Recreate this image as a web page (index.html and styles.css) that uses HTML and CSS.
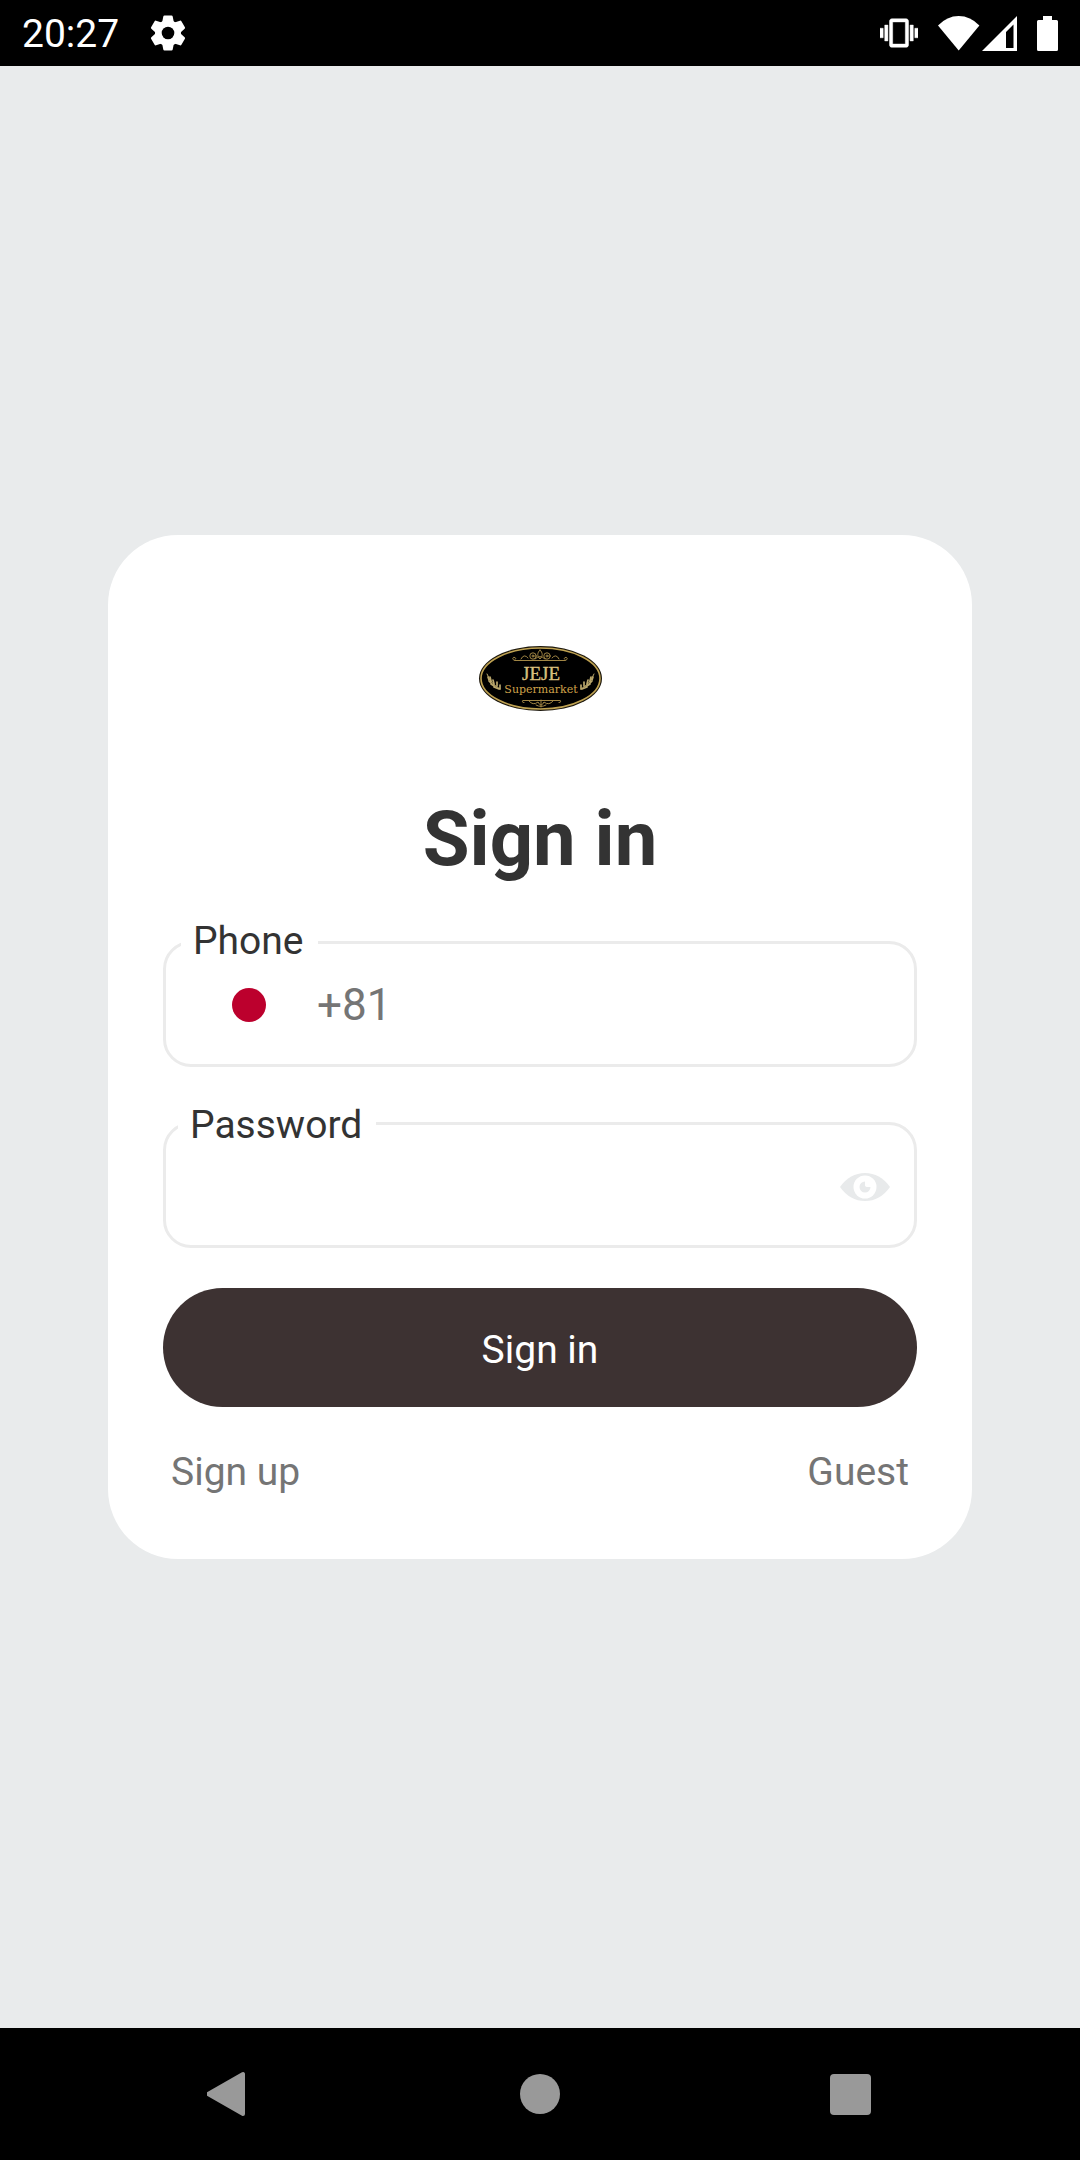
FILE: index.html
```html
<!DOCTYPE html>
<html lang="en">
<head>
<meta charset="utf-8">
<meta name="viewport" content="width=device-width, initial-scale=1">
<title>JEJE Supermarket – Sign in</title>
<link rel="stylesheet" href="styles.css">
</head>
<body>
<header class="status-bar">
  <div class="status-left">
    <span class="clock">20:27</span>
    <svg class="icon-gear" viewBox="-21 -21 42 42" aria-hidden="true">
      <g fill="#fff">
        <circle r="13"/>
        <path id="tooth" d="M-6-10L-4.700-16.500Q-4.500-17.500-3.500-17.500H3.500Q4.500-17.500 4.700-16.500L6-10Z"/>
        <use href="#tooth" transform="rotate(60)"/>
        <use href="#tooth" transform="rotate(120)"/>
        <use href="#tooth" transform="rotate(180)"/>
        <use href="#tooth" transform="rotate(240)"/>
        <use href="#tooth" transform="rotate(300)"/>
      </g>
      <circle r="6.300" fill="#000"/>
    </svg>
  </div>
  <div class="status-right">
    <svg class="icon-vibrate" viewBox="0 0 24 24" aria-hidden="true"><path fill="#fff" stroke="#fff" stroke-width=".3" d="M0 15h2V9H0v6zm3 2h2V7H3v10zm19-8v6h2V9h-2zm-3 8h2V7h-2v10zM16.500 3h-9C6.670 3 6 3.670 6 4.500v15c0 .83.67 1.500 1.500 1.500h9c.83 0 1.500-.67 1.500-1.500v-15c0-.83-.67-1.500-1.500-1.500zM16 19H8V5h8v14z"/></svg>
    <svg class="icon-wifi" viewBox="0 0 42 35" aria-hidden="true"><path fill="#fff" d="M0 9.500Q9 0 20.700 0T41.400 9.500L20.700 34.500Z"/></svg>
    <svg class="icon-signal" viewBox="0 0 35 35" aria-hidden="true"><path fill="#fff" fill-rule="evenodd" d="M0 35L35 0V35ZM24 16V32H31.500V8.500Z"/></svg>
    <svg class="icon-battery" viewBox="0 0 21 35" aria-hidden="true"><path fill="#fff" d="M6 0H15V4H19.500Q21 4 21 5.500V33.500Q21 35 19.500 35H1.500Q0 35 0 33.500V5.500Q0 4 1.500 4H6Z"/></svg>
  </div>
</header>

<main class="screen">
  <form class="card">
    <svg class="logo" viewBox="0 0 124 66" role="img" aria-label="JEJE Supermarket">
      <ellipse cx="62.500" cy="32.500" rx="61.500" ry="32.500" fill="#1c170c"/>
      <ellipse cx="62.500" cy="32.500" rx="59.500" ry="30.500" fill="#000" stroke="#bfa252" stroke-width="1.600"/>
      <g fill="none" stroke="#a18645" stroke-width="1" stroke-linecap="round">
        <path d="M37 14.500H87M37 14.500c-3 0-3-4 0-3q2 1 0 2M87 14.500c3 0 3-4 0-3q-2 1 0 2"/>
        <circle cx="55" cy="10" r="3.200"/><circle cx="69" cy="10" r="3.200"/>
        <circle cx="55" cy="10" r="1"/><circle cx="69" cy="10" r="1"/>
        <path d="M62 4c-3 3-3 6 0 9c3-3 3-6 0-9M50 12q-4-5-7 1M74 12q4-5 7 1M57 13q5-5 10 0"/>
        <path d="M45 54.500H82M45 54.500q-2 2 1 2M82 54.500q2 2-1 2M51 55q4 5 9 1q3 6 6 0q5 4 9-1M63 54v7M58 59q5 3 10 0"/>
      </g>
      <g id="leaf" stroke="#b9a66b" stroke-width="1.700" stroke-linecap="round" fill="none">
        <path stroke-width="1" d="M9 28Q13 38 22 43"/>
        <path d="M10 31L11 34M11 35L14 38M13 38L17 40.500M16 41L21 43M12 31L13 35M15 34L16 38M19 36L19 40M22 39L22 43"/>
      </g>
      <use href="#leaf" transform="matrix(-1 0 0 1 125 0)"/>
      <text class="logo-name" x="63" y="34" text-anchor="middle">JEJE</text>
      <text class="logo-sub" x="63" y="47" text-anchor="middle">Supermarket</text>
    </svg>
    <h1 class="title">Sign in</h1>

    <div class="field field-phone">
      <label class="field-label label-phone" for="phone">Phone</label>
      <button class="flag" type="button" aria-label="Country: Japan"><span class="flag-sun"></span></button>
      <input class="field-input" id="phone" type="tel" placeholder="+81">
    </div>

    <div class="field field-password">
      <label class="field-label label-password" for="password">Password</label>
      <input class="field-input" id="password" type="password">
      <button class="reveal" type="button" aria-label="Show password">
        <svg class="icon-eye" viewBox="0 0 50 28" aria-hidden="true">
          <path fill="#e8eaeb" d="M0 14Q10 0 25 0T50 14Q40 28 25 28T0 14Z"/>
          <circle cx="25" cy="14" r="11.500" fill="#fff"/>
          <path fill="#e8eaeb" d="M25 8.500A5.500 5.500 0 1 0 30.500 14H27A2.500 2.500 0 0 1 25 11Z"/>
        </svg>
      </button>
    </div>

    <button class="submit" type="submit">Sign in</button>
    <nav class="links">
      <a href="#signup">Sign up</a>
      <a href="#guest">Guest</a>
    </nav>
  </form>
</main>

<footer class="nav-bar">
  <button class="nav-button" type="button" aria-label="Back">
    <svg class="icon-nav" viewBox="0 0 46 46" aria-hidden="true"><path fill="#999" stroke="#999" stroke-width="4" stroke-linejoin="round" d="M36 3V43L1 23Z"/></svg>
  </button>
  <button class="nav-button" type="button" aria-label="Home">
    <svg class="icon-nav" viewBox="0 0 46 46" aria-hidden="true"><circle cx="23" cy="23" r="20" fill="#999"/></svg>
  </button>
  <button class="nav-button" type="button" aria-label="Recent apps">
    <svg class="icon-nav" viewBox="0 0 46 46" aria-hidden="true"><rect x="3" y="3" width="41" height="41" rx="4" fill="#999"/></svg>
  </button>
</footer>
</body>
</html>
```
FILE: styles.css
```css
* { box-sizing: border-box; }

body {
  margin: 0;
  min-height: 100vh;
  display: flex;
  flex-direction: column;
  background: #e9ebec;
  color: #333;
  font-family: Roboto, "Liberation Sans", sans-serif;
  font-size: 39px;
  line-height: 46px;
}

button, input {
  margin: 0;
  padding: 0;
  border: 0;
  background: none;
  color: inherit;
  font: inherit;
}

svg { display: block; flex: none; }

/* Status bar */
.status-bar {
  display: flex;
  justify-content: space-between;
  align-items: center;
  height: 66px;
  padding: 0 22px;
  background: #000;
  color: #fff;
}
.status-left, .status-right { display: flex; align-items: center; }
.status-left { gap: 28px; }
.clock { padding-top: 2px; }
.icon-gear { width: 42px; height: 42px; }
.icon-vibrate { width: 38px; height: 38px; margin-right: 20px; }
.icon-wifi { width: 42px; height: 35px; margin-right: 2px; }
.icon-signal { width: 35px; height: 35px; margin-right: 20px; }
.icon-battery { width: 21px; height: 35px; }

/* Sign-in card */
.screen {
  flex: 1;
  display: flex;
  align-items: center;
  justify-content: center;
}
.card {
  display: flex;
  flex-direction: column;
  width: 80%;
  padding: 111px 55px 64px;
  border-radius: 70px;
  background: #fff;
}
.logo { width: 124px; height: 66px; align-self: center; }
.logo-name { font: 19px "Liberation Serif", serif; fill: #d9bf7c; stroke: #d9bf7c; stroke-width: .4px; }
.logo-sub { font: 11px "DejaVu Serif", serif; fill: #cfa24a; }

.title {
  margin: 82px 0 57px;
  font-size: 76px;
  line-height: 90px;
  font-weight: 700;
  text-align: center;
}

.field {
  position: relative;
  display: flex;
  align-items: center;
  height: 126px;
  border: 3px solid #ebebeb;
  border-radius: 28px;
}
.field-phone { margin-bottom: 55px; padding-top: 2px; }
.field-password { margin-bottom: 40px; padding: 4px 24px 0; }
.field-label {
  position: absolute;
  padding: 0 14px 0 12px;
  background: #fff;
}
.label-phone { top: -26px; left: 15px; }
.label-password { top: -23px; left: 12px; }
.field-input {
  flex: 1;
  min-width: 0;
  height: 60px;
  font-size: 44px;
  outline: 0;
}
.field-input::placeholder { color: #757575; opacity: 1; }

.flag {
  display: grid;
  place-items: center;
  width: 80px;
  height: 60px;
  margin: 0 28px 0 43px;
}
.flag-sun { width: 34px; height: 34px; border-radius: 50%; background: #bc002d; }
.icon-eye { width: 50px; height: 28px; }

.submit {
  height: 119px;
  padding-top: 4px;
  border-radius: 60px;
  background: #3d3232;
  color: #fff;
}
.links {
  display: flex;
  justify-content: space-between;
  margin-top: 42px;
  padding: 0 8px;
}
.links a { color: #757575; text-decoration: none; }

/* System navigation */
.nav-bar {
  display: grid;
  grid-template-columns: repeat(3, 1fr);
  height: 132px;
  padding: 0 75px;
  background: #000;
}
.nav-button { display: grid; place-items: center; }
.icon-nav { width: 46px; height: 46px; }
```
